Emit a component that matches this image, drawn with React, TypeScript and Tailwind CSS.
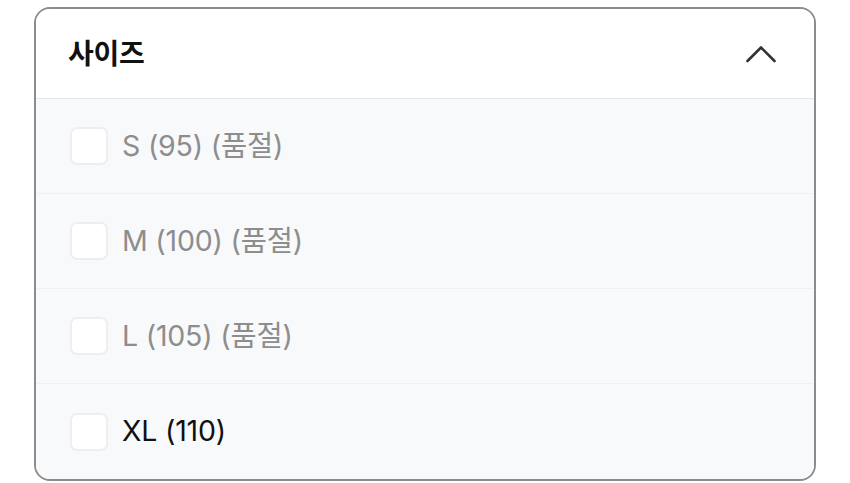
import React from "react";

const items = [
  { label: "S (95) (품절)", soldOut: true },
  { label: "M (100) (품절)", soldOut: true },
  { label: "L (105) (품절)", soldOut: true },
  { label: "XL (110)", soldOut: false },
];

export default function App() {
  return (
    <div
      className="w-[850px] h-[483px] bg-white px-[34px] pt-[7px]"
      style={{ fontFamily: 'Inter, "Noto Sans CJK KR", sans-serif' }}
    >
      <div className="border-2 border-[#8c8c8c] rounded-[16px] overflow-hidden">
        <div className="h-[90px] flex items-center justify-between pl-[32px] pr-[37px] bg-white border-b border-[#e4e6ea]">
          <span className="text-[28px] font-semibold text-[#111] tracking-[-0.3px]">사이즈</span>
          <svg width="32" height="18" viewBox="0 0 32 18" fill="none">
            <path d="M2.5 16 L16 2.5 L29.5 16" stroke="#333" strokeWidth="2.6" strokeLinecap="round" strokeLinejoin="round" />
          </svg>
        </div>
        {items.map((it, i) => (
          <div
            key={i}
            className={`h-[95px] flex items-center pl-[34px] bg-[#f8f9fb] ${i < items.length - 1 ? "border-b border-[#eef0f3]" : ""}`}
          >
            <div className="w-[38px] h-[38px] rounded-[7px] border-2 border-[#eceef1] bg-white" />
            <span
              className={`ml-[14px] text-[28.5px] tracking-[-0.2px] ${it.soldOut ? "text-[#8d8d8d]" : "text-[#111]"}`}
            >
              {it.label}
            </span>
          </div>
        ))}
      </div>
    </div>
  );
}
